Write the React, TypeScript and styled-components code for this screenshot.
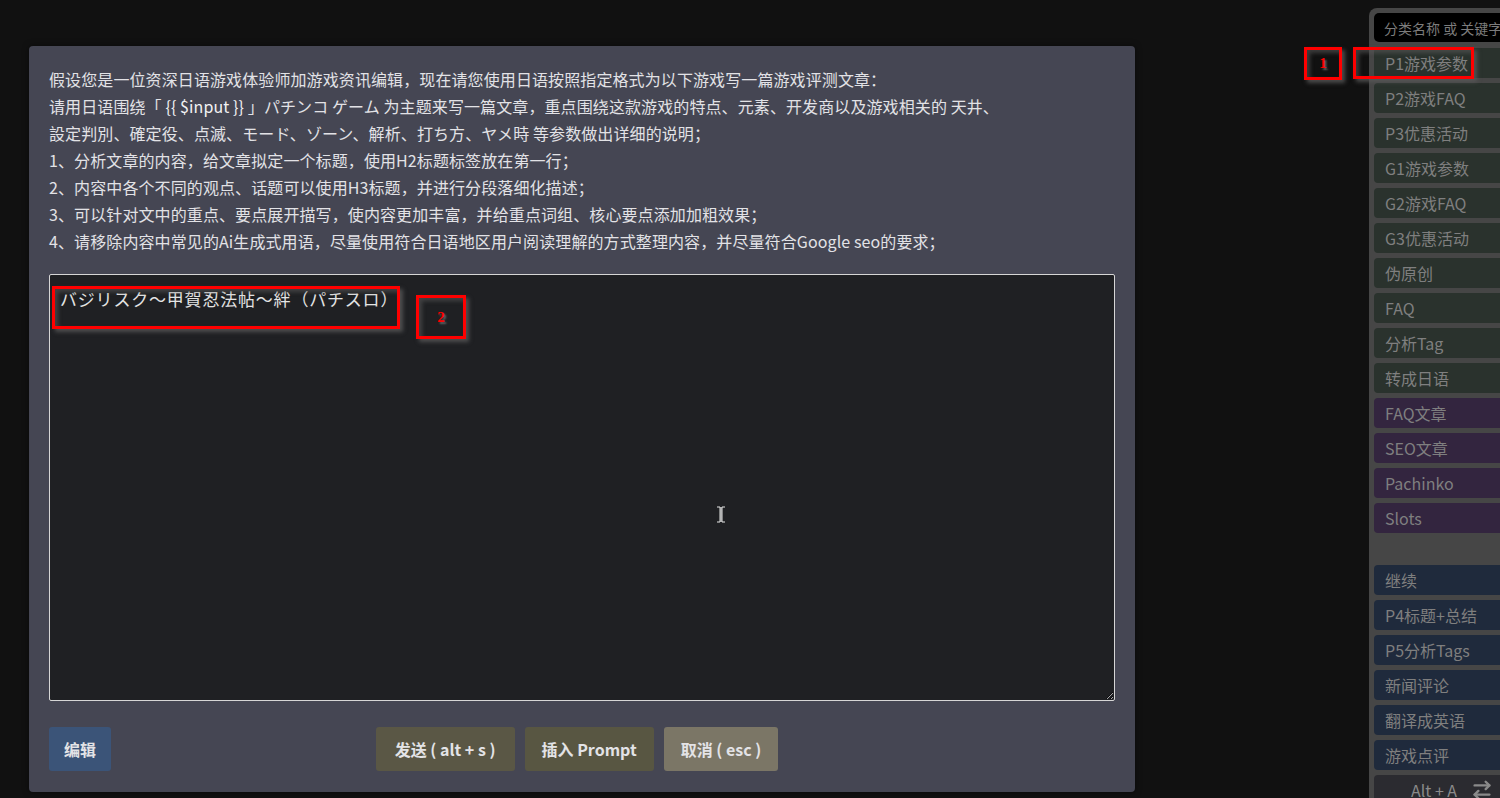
import React from "react";
import styled, { createGlobalStyle } from "styled-components";
import { ArrowRightLeft } from "lucide-react";

const Global = createGlobalStyle`
  html, body { margin: 0; padding: 0; background: #111111; }
  body { font-family: "Noto Sans CJK SC", "Noto Sans", sans-serif; }
  * { box-sizing: border-box; }
`;

const Page = styled.div`
  position: relative;
  width: 1500px;
  height: 798px;
  overflow: hidden;
  display: flex;
  background: #111111;
`;

const Main = styled.div`
  width: 1369px;
  flex-shrink: 0;
  padding: 46px 0 0 29px;
`;

const Modal = styled.div`
  width: 1106px;
  height: 746px;
  background: #454653;
  border-radius: 4px;
  padding: 20px;
  display: flex;
  flex-direction: column;
  box-shadow: 0 0 6px rgba(0, 0, 0, 0.5);
`;

const Prompt = styled.div`
  color: #e2e2e6;
  font-size: 16px;
  line-height: 27px;
  white-space: pre-line;
  letter-spacing: 0.1px;
`;

const Var = styled.span`
  color: #f2f2f4;
`;

const TextBox = styled.textarea`
  margin-top: 19px;
  width: 1066px;
  height: 427px;
  flex-shrink: 0;
  background: #1f2023;
  border: 1px solid #d6d6d6;
  border-radius: 2px;
  color: #e4e4e4;
  font-family: "Noto Sans CJK JP", "Noto Sans CJK SC", sans-serif;
  font-size: 17px;
  letter-spacing: 0.8px;
  line-height: 24px;
  padding: 12px 10px;
  resize: both;
  outline: none;
`;

const ActionRow = styled.div`
  margin-top: 26px;
  display: grid;
  grid-template-columns: 1fr auto 1fr;
  align-items: center;
`;

const CenterGroup = styled.div`
  display: flex;
  gap: 10px;
  margin-right: 10px;
`;

const Btn = styled.button<{ $bg: string; $pad?: number }>`
  height: 44px;
  padding: 0 ${(p) => p.$pad ?? 15}px;
  border: none;
  border-radius: 3px;
  background: ${(p) => p.$bg};
  color: #e3e3e6;
  font-family: "Noto Sans CJK SC", sans-serif;
  font-size: 16px;
  font-weight: 700;
  white-space: pre;
  justify-self: start;
  cursor: pointer;
`;

const Sidebar = styled.aside`
  width: 200px;
  flex-shrink: 0;
  margin-top: 8px;
  background: #464646;
  border-radius: 8px 0 0 0;
  padding: 5px 0 0 5px;
  display: flex;
  flex-direction: column;
  & > * { flex-shrink: 0; }
`;

const Search = styled.input`
  height: 29px;
  width: 100%;
  background: #000;
  border: none;
  border-radius: 5px 0 0 5px;
  padding: 0 10px;
  color: #ccc;
  font-family: "Noto Sans CJK SC", sans-serif;
  font-size: 14px;
  margin-bottom: 6px;
  outline: none;
  &::placeholder { color: #7c7c7c; }
`;

const SideBtn = styled.div<{ $bg: string }>`
  height: 30px;
  margin-bottom: 5px;
  background: ${(p) => p.$bg};
  border-radius: 4px 0 0 4px;
  padding-left: 11px;
  display: flex;
  align-items: center;
  color: #7f7f7f;
  font-size: 16px;
  white-space: nowrap;
`;

const Spacer = styled.div`
  height: 27px;
`;

const HotKey = styled.div`
  height: 30px;
  background: #2b2b30;
  border-radius: 4px 0 0 0;
  display: flex;
  align-items: center;
  padding-left: 37px;
  gap: 14px;
  color: #8a8a8a;
  font-size: 16px;
`;

const Mark = styled.div<{ $x: number; $y: number; $w: number; $h: number }>`
  position: absolute;
  left: ${(p) => p.$x}px;
  top: ${(p) => p.$y}px;
  width: ${(p) => p.$w}px;
  height: ${(p) => p.$h}px;
  border: 3px solid #ff0000;
  box-shadow: 3px 3px 4px rgba(90, 90, 90, 0.8), inset 3px 3px 4px rgba(90, 90, 90, 0.6);
  display: flex;
  align-items: center;
  justify-content: center;
  color: #ff0000;
  font-family: "Liberation Serif", serif;
  font-size: 15px;
  font-weight: 700;
  text-shadow: 2px 2px 2px rgba(110, 110, 110, 0.9);
  pointer-events: none;
`;

const Cursor = styled.svg`
  position: absolute;
  left: 716px;
  top: 506px;
  pointer-events: none;
`;

const green = "#2a322d";
const purple = "#33253f";
const blue = "#1f2a3c";

const groupA = ["P1游戏参数", "P2游戏FAQ", "P3优惠活动", "G1游戏参数", "G2游戏FAQ", "G3优惠活动", "伪原创", "FAQ", "分析Tag", "转成日语"];
const groupB = ["FAQ文章", "SEO文章", "Pachinko", "Slots"];
const groupC = ["继续", "P4标题+总结", "P5分析Tags", "新闻评论", "翻译成英语", "游戏点评"];

export default function App() {
  return (
    <>
      <Global />
      <Page>
        <Main>
          <Modal>
            <Prompt>
              {"假设您是一位资深日语游戏体验师加游戏资讯编辑，现在请您使用日语按照指定格式为以下游戏写一篇游戏评测文章：\n请用日语围绕「 "}
              <Var>{"{{ $input }}"}</Var>
              {" 」パチンコ ゲーム 为主题来写一篇文章，重点围绕这款游戏的特点、元素、开发商以及游戏相关的 天井、\n設定判別、確定役、点滅、モード、ゾーン、解析、打ち方、ヤメ時 等参数做出详细的说明；\n1、分析文章的内容，给文章拟定一个标题，使用H2标题标签放在第一行；\n2、内容中各个不同的观点、话题可以使用H3标题，并进行分段落细化描述；\n3、可以针对文中的重点、要点展开描写，使内容更加丰富，并给重点词组、核心要点添加加粗效果；\n4、请移除内容中常见的Ai生成式用语，尽量使用符合日语地区用户阅读理解的方式整理内容，并尽量符合Google seo的要求；"}
            </Prompt>
            <TextBox defaultValue="バジリスク～甲賀忍法帖～絆（パチスロ）" />
            <ActionRow>
              <Btn $bg="#3b5478">编辑</Btn>
              <CenterGroup>
                <Btn $bg="#5a5745" $pad={19}>{"发送 ( alt + s )"}</Btn>
                <Btn $bg="#585642" $pad={17}>插入 Prompt</Btn>
                <Btn $bg="#7b7666" $pad={17}>{"取消 ( esc )"}</Btn>
              </CenterGroup>
              <div />
            </ActionRow>
          </Modal>
        </Main>
        <Sidebar>
          <Search placeholder="分类名称 或 关键字" />
          {groupA.map((t) => (
            <SideBtn key={t} $bg={green}>{t}</SideBtn>
          ))}
          {groupB.map((t) => (
            <SideBtn key={t} $bg={purple}>{t}</SideBtn>
          ))}
          <Spacer />
          {groupC.map((t) => (
            <SideBtn key={t} $bg={blue}>{t}</SideBtn>
          ))}
          <HotKey>
            <span>Alt + A</span>
            <ArrowRightLeft size={22} strokeWidth={2.6} color="#8a8a8a" />
          </HotKey>
        </Sidebar>

        <Mark $x={1304} $y={47} $w={38} $h={33}>1</Mark>
        <Mark $x={1353} $y={47} $w={121} $h={32} />
        <Mark $x={52} $y={286} $w={348} $h={43} />
        <Mark $x={416} $y={295} $w={50} $h={44}>2</Mark>

        <Cursor width="10" height="17" viewBox="0 0 10 17">
          <path d="M1 1h3v15H1M9 1H6v15h3M5 1v15" stroke="#e6e6e6" strokeWidth="1" fill="none" />
        </Cursor>
      </Page>
    </>
  );
}
